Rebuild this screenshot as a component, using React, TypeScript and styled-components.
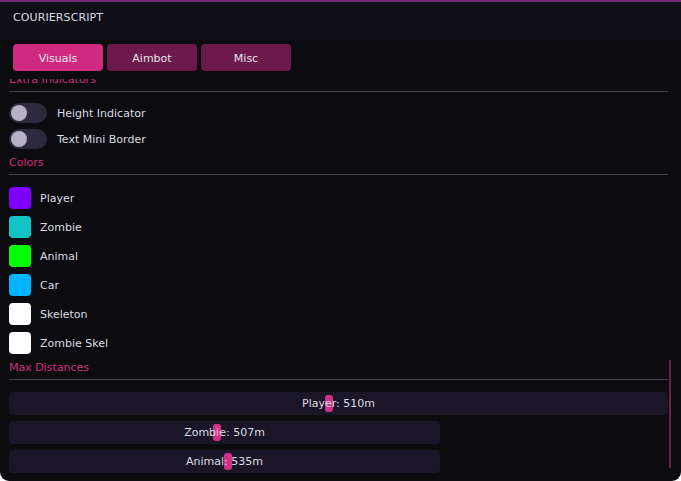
import React from "react";
import styled, { createGlobalStyle } from "styled-components";

const GlobalStyle = createGlobalStyle`
  html, body {
    margin: 0;
    padding: 0;
    background: #ffffff;
  }
  body {
    font-family: "DejaVu Sans", Verdana, sans-serif;
  }
`;

const Window = styled.div`
  width: 681px;
  height: 481px;
  box-sizing: border-box;
  background: #0b0b10;
  border-top: 2px solid #6e2a74;
  border-radius: 0 0 9px 9px;
  overflow: hidden;
  display: flex;
  flex-direction: column;
  color: #dcdce2;
  font-size: 11px;
`;

const TitleBar = styled.div`
  height: 38px;
  box-sizing: border-box;
  flex: none;
  padding: 9px 0 0 13px;
  line-height: 13px;
  background: #100f17;
  letter-spacing: 0.1px;
`;

const TabBar = styled.div`
  display: flex;
  gap: 4px;
  padding: 4px 13px 0;
  flex: none;
`;

const Tab = styled.button<{ $active?: boolean }>`
  width: 90px;
  height: 27px;
  padding: 1px 0 0;
  border: none;
  border-radius: 4px;
  font: inherit;
  color: #e6e2ea;
  background: ${(p) => (p.$active ? "#d02a80" : "#6b1a4b")};
  cursor: pointer;
`;

// scrolled child region; content is shifted up by the scroll offset
const ScrollArea = styled.div`
  position: relative;
  margin-top: 8px;
  height: 394px;
  overflow: hidden;
  padding: 0 13px 0 9px;
`;

const ScrollContent = styled.div`
  margin-top: -6px;
  display: flex;
  flex-direction: column;
`;

const ScrollThumb = styled.div`
  position: absolute;
  right: 10px;
  top: 281px;
  width: 2px;
  height: 108px;
  background: #6e1c48;
`;

const SectionTitle = styled.div`
  color: #d0307f;
  height: 13px;
  line-height: 13px;
`;

const Separator = styled.div`
  height: 1px;
  background: #44424f;
  margin: 5px 0 11px;
`;

const ToggleList = styled.div`
  display: flex;
  flex-direction: column;
  gap: 6px;
  margin-bottom: 7px;
`;

const ToggleRow = styled.label`
  display: flex;
  align-items: center;
  gap: 10px;
  height: 20px;
`;

const Toggle = styled.span<{ $on?: boolean }>`
  width: 38px;
  height: 20px;
  border-radius: 10px;
  background: ${(p) => (p.$on ? "#d02a80" : "#2e2a3e")};
  position: relative;
  flex: none;

  &::after {
    content: "";
    position: absolute;
    top: 2px;
    left: ${(p) => (p.$on ? "20px" : "2px")};
    width: 16px;
    height: 16px;
    border-radius: 50%;
    background: #b8b0c4;
  }
`;

const ColorList = styled.div`
  display: flex;
  flex-direction: column;
  gap: 7px;
  margin-top: 1px;
  margin-bottom: 7px;
`;

const ColorRow = styled.div`
  display: flex;
  align-items: center;
  gap: 9px;
  height: 22px;
`;

const Swatch = styled.span<{ $color: string }>`
  width: 22px;
  height: 22px;
  border-radius: 4px;
  background: ${(p) => p.$color};
  flex: none;
`;

const SliderList = styled.div`
  display: flex;
  flex-direction: column;
  gap: 6px;
  margin-top: 1px;
`;

const SliderFrame = styled.div<{ $width: number }>`
  position: relative;
  width: ${(p) => p.$width}px;
  height: 23px;
  border-radius: 4px;
  background: #1a1628;
  display: flex;
  align-items: center;
  justify-content: center;
`;

const Grab = styled.span`
  position: absolute;
  top: 3px;
  width: 8px;
  height: 17px;
  border-radius: 3px;
  background: #d3308a;
`;

const SliderText = styled.span`
  position: relative;
  color: #dcdce2;
`;

type SliderProps = {
  label: string;
  value: number;
  max: number;
  width: number;
};

const DistanceSlider: React.FC<SliderProps> = ({ label, value, max, width }) => {
  const pad = 2;
  const grabW = 8;
  const left = pad + (value / max) * (width - pad * 2 - grabW);
  return (
    <SliderFrame $width={width}>
      <Grab style={{ left }} />
      <SliderText>
        {label}: {value}m
      </SliderText>
    </SliderFrame>
  );
};

const colors = [
  { name: "Player", color: "#8000ff" },
  { name: "Zombie", color: "#10c4c6" },
  { name: "Animal", color: "#00ff00" },
  { name: "Car", color: "#00b4ff" },
  { name: "Skeleton", color: "#ffffff" },
  { name: "Zombie Skel", color: "#ffffff" },
];

const App: React.FC = () => {
  return (
    <>
      <GlobalStyle />
      <Window>
        <TitleBar>COURIERSCRIPT</TitleBar>
        <TabBar>
          <Tab $active>Visuals</Tab>
          <Tab>Aimbot</Tab>
          <Tab>Misc</Tab>
        </TabBar>
        <ScrollArea>
          <ScrollContent>
            <SectionTitle>Extra Indicators</SectionTitle>
            <Separator />
            <ToggleList>
              <ToggleRow>
                <Toggle />
                Height Indicator
              </ToggleRow>
              <ToggleRow>
                <Toggle />
                Text Mini Border
              </ToggleRow>
            </ToggleList>
            <SectionTitle>Colors</SectionTitle>
            <Separator />
            <ColorList>
              {colors.map((c) => (
                <ColorRow key={c.name}>
                  <Swatch $color={c.color} />
                  {c.name}
                </ColorRow>
              ))}
            </ColorList>
            <SectionTitle>Max Distances</SectionTitle>
            <Separator />
            <SliderList>
              <DistanceSlider label="Player" value={510} max={1050} width={659} />
              <DistanceSlider label="Zombie" value={507} max={1050} width={431} />
              <DistanceSlider label="Animal" value={535} max={1050} width={431} />
            </SliderList>
          </ScrollContent>
          <ScrollThumb />
        </ScrollArea>
      </Window>
    </>
  );
};

export default App;
